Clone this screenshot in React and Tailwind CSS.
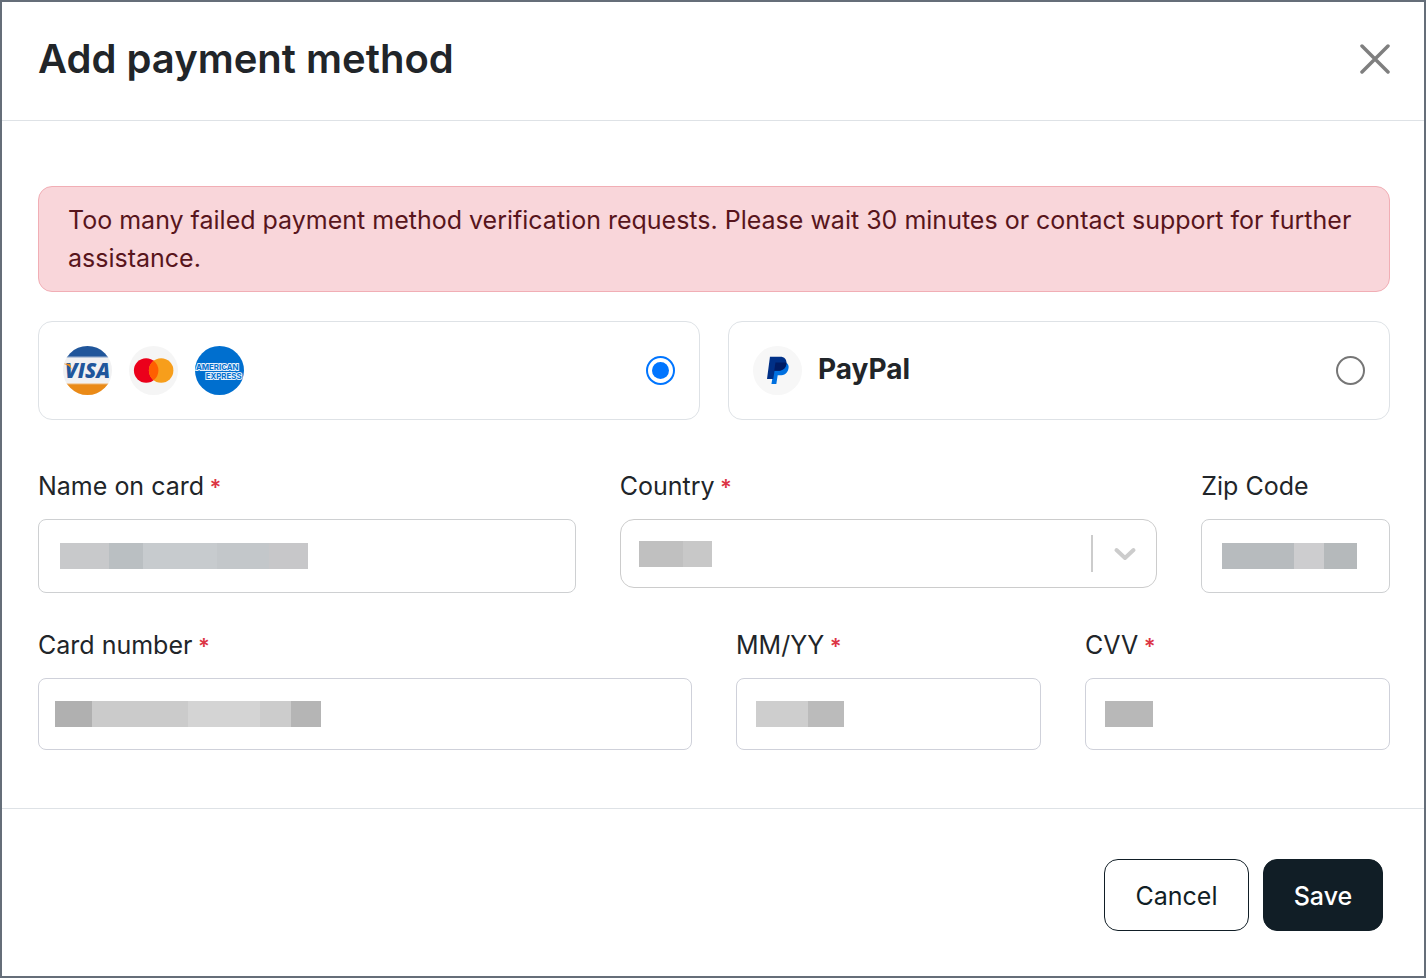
import React, { useState } from 'react'

const INPUT = 'block w-full rounded-lg border bg-white px-4 text-[25px] text-[#212529] focus:outline-none focus:ring-2 focus:ring-blue-500'

// Hidden values are shown as a strip of grey blocks: [width class, colour class]
const NAME_MASK = ['w-[49px] bg-[#c8c9cb]', 'w-[34px] bg-[#babfc2]', 'w-[74px] bg-[#c7cbce]', 'w-[52px] bg-[#c3c7ca]', 'w-[39px] bg-[#c7c7c9]']
const COUNTRY_MASK = ['w-[44px] bg-[#c0c0c0]', 'w-[29px] bg-[#c8c8c8]']
const ZIP_MASK = ['w-[72px] bg-[#b7bbbe]', 'w-[30px] bg-[#cdcdcf]', 'w-[33px] bg-[#b5b9bb]']
const CARD_MASK = ['w-[37px] bg-[#b0b0b0]', 'w-[96px] bg-[#cbcbcb]', 'w-[72px] bg-[#d4d4d4]', 'w-[31px] bg-[#cccccc]', 'w-[30px] bg-[#b5b5b5]']
const EXPIRY_MASK = ['w-[52px] bg-[#cecece]', 'w-[36px] bg-[#bbbbbb]']
const CVV_MASK = ['w-[48px] bg-[#b8b8b8]']

function Mask({ blocks, className }) {
  return (
    <span aria-hidden="true" className={`pointer-events-none absolute inset-y-0 flex items-center ${className}`}>
      {blocks.map((block, i) => (
        <span key={i} className={`h-[26px] ${block}`} />
      ))}
    </span>
  )
}

function Field({ id, label, required, className, children }) {
  return (
    <div className={className}>
      <label htmlFor={id} className="mb-[14px] block text-[25px] leading-[38px]">
        {label}
        {required && <span className="text-[22px] leading-none font-semibold text-[#dc3545]"> *</span>}
      </label>
      <div className="relative">{children}</div>
    </div>
  )
}

function VisaLogo() {
  return (
    <svg viewBox="0 0 50 50" className="h-[49px] w-[49px]" aria-hidden="true">
      <defs>
        <clipPath id="visa-circle">
          <circle cx="25" cy="25" r="25" />
        </clipPath>
      </defs>
      <g clipPath="url(#visa-circle)">
        <rect width="50" height="50" fill="#f1f1f2" />
        <rect width="50" height="11" fill="#20569b" />
        <rect y="11" width="50" height="1" fill="#a9bbd6" />
        <rect y="38" width="50" height="1" fill="#f3c997" />
        <rect y="39" width="50" height="11" fill="#ea8a17" />
      </g>
      <text x="2" y="33" fontFamily="Open Sans, sans-serif" fontWeight="800" fontStyle="italic" fontSize="21" fill="#20569b">
        VISA
      </text>
      <path d="M1 18h4.500c1.300 0 2 .5 2.300 1.800l1 4.200C7.500 21.300 4.800 19.200 1 18.400z" fill="#ea8a17" />
    </svg>
  )
}

function MastercardLogo() {
  return (
    <svg viewBox="0 0 50 50" className="h-[49px] w-[49px]" aria-hidden="true">
      <circle cx="25" cy="25" r="25" fill="#f5f5f5" />
      <circle cx="17.500" cy="25" r="12.500" fill="#eb001b" />
      <circle cx="32.800" cy="25" r="12.500" fill="#f79e1b" />
      <path d="M25.150 15.100a12.500 12.500 0 0 1 0 19.800a12.500 12.500 0 0 1 0-19.800z" fill="#ff5f00" />
    </svg>
  )
}

function AmexLogo() {
  return (
    <svg viewBox="0 0 50 50" className="h-[49px] w-[49px]" aria-hidden="true">
      <circle cx="25" cy="25" r="25" fill="#006fcf" />
      <g fontFamily="Inter, sans-serif" fontWeight="700" fontSize="8" fill="#006fcf" stroke="#e4effa" strokeWidth="2" paintOrder="stroke">
        <text x="1" y="24">AMERICAN</text>
        <text x="11" y="34">EXPRESS</text>
      </g>
    </svg>
  )
}

function PayPalLogo() {
  return (
    <svg viewBox="0 0 50 50" className="h-[49px] w-[49px]" aria-hidden="true">
      <circle cx="25" cy="25" r="25" fill="#f7f7f7" />
      <path d="M22.500 17.500h12.200c1.600 1.500 2 3.300 1.500 5.400-.9 4.800-4.100 7-8.900 7h-2.100l-1.400 9h-5z" fill="#0070e0" />
      <path d="M17.300 11h10.200c4.700 0 7.300 2.700 6.500 7.300-.9 4.900-4.200 7-9 7h-3l-1.300 8.500h-6.400l3-22.800z" fill="#003087" />
      <path d="M22.900 16.800h11.300c.1 5.500-3.500 8.500-9.200 8.500h-3.300z" fill="#001c64" />
    </svg>
  )
}

function MethodOption({ value, method, onChange, name, children }) {
  return (
    <label className="flex flex-1 items-center rounded-[14px] border border-[#dee2e6] p-6">
      {children}
      <input
        type="radio"
        name="method"
        aria-label={name}
        value={value}
        checked={method === value}
        onChange={() => onChange(value)}
        className="ml-auto h-[29px] w-[29px] appearance-none rounded-full border-2 border-[#767676] bg-clip-content p-1 checked:border-[#0075ff] checked:bg-[#0075ff]"
      />
    </label>
  )
}

export default function App() {
  const [method, setMethod] = useState('card')

  return (
    <div
      role="dialog"
      aria-labelledby="dialog-title"
      className="min-h-screen border-2 border-[#656e79] bg-white font-['Inter',sans-serif] text-[#212529]"
    >
      <header className="flex items-center justify-between border-b border-[#dee2e6] pt-[25px] pr-[34px] pb-[29px] pl-9">
        <h1 id="dialog-title" className="text-[40px] leading-[64px] font-semibold">
          Add payment method
        </h1>
        <button type="button" aria-label="Close" className="-mr-1 p-1">
          <svg viewBox="0 0 30 30" className="h-[30px] w-[30px]" fill="none" stroke="#7f7f7f" strokeWidth="3.500" strokeLinecap="round">
            <path d="M2 2l26 26M28 2L2 28" />
          </svg>
        </button>
      </header>

      <form onSubmit={(e) => e.preventDefault()}>
        <div className="pt-[65px] pr-[34px] pb-[58px] pl-9">
          <div role="alert" className="rounded-[14px] border border-[#f1aeb5] bg-[#f9d6da] px-[29px] py-[14px] text-[25px] leading-[38px] text-[#58151c]">
            Too many failed payment method verification requests. Please wait 30 minutes or contact support for further assistance.
          </div>

          <div className="mt-[29px] flex gap-7">
            <MethodOption value="card" name="Credit card" method={method} onChange={setMethod}>
              <span className="flex gap-[17px]">
                <VisaLogo />
                <MastercardLogo />
                <AmexLogo />
              </span>
            </MethodOption>
            <MethodOption value="paypal" name="PayPal" method={method} onChange={setMethod}>
              <PayPalLogo />
              <span className="ml-4 pb-1 text-[28px] leading-[38px] font-bold">PayPal</span>
            </MethodOption>
          </div>

          <div className="mt-[47px] grid grid-cols-12 gap-x-11 gap-y-[33px]">
            <Field id="name" label="Name on card" required className="col-span-5">
              <input id="name" type="text" className={`${INPUT} h-[74px] border-[#ced0d2]`} />
              <Mask blocks={NAME_MASK} className="left-[22px]" />
            </Field>
            <Field id="country" label="Country" required className="col-span-5">
              <select id="country" className="block h-[69px] w-full appearance-none rounded-[14px] border border-[#cccccc] bg-white px-4 text-[25px] focus:outline-none focus:ring-2 focus:ring-blue-500" />
              <Mask blocks={COUNTRY_MASK} className="left-[19px]" />
              <span className="pointer-events-none absolute inset-y-0 right-5 flex items-center gap-5">
                <span className="h-[37px] w-[2px] bg-[#cccccc]" />
                <svg viewBox="0 0 24 24" className="h-6 w-6" fill="none" stroke="#cccccc" strokeWidth="4" strokeLinecap="round" strokeLinejoin="round">
                  <path d="M3.500 8l8.500 8 8.500-8" />
                </svg>
              </span>
            </Field>
            <Field id="zip" label="Zip Code" className="col-span-2">
              <input id="zip" type="text" className={`${INPUT} h-[74px] border-[#ced0d2]`} />
              <Mask blocks={ZIP_MASK} className="left-[21px]" />
            </Field>

            <Field id="card-number" label="Card number" required className="col-span-6">
              <input id="card-number" type="text" inputMode="numeric" className={`${INPUT} h-[72px] border-[#cfd1da]`} />
              <Mask blocks={CARD_MASK} className="left-[17px]" />
            </Field>
            <Field id="expiry" label="MM/YY" required className="col-span-3">
              <input id="expiry" type="text" inputMode="numeric" className={`${INPUT} h-[72px] border-[#cfd1da]`} />
              <Mask blocks={EXPIRY_MASK} className="left-5" />
            </Field>
            <Field id="cvv" label="CVV" required className="col-span-3">
              <input id="cvv" type="text" inputMode="numeric" className={`${INPUT} h-[72px] border-[#cfd1da]`} />
              <Mask blocks={CVV_MASK} className="left-5" />
            </Field>
          </div>
        </div>

        <footer className="flex justify-end gap-[14px] border-t border-[#dee2e6] px-[41px] pt-[50px] pb-[45px]">
          <button type="button" className="h-[72px] min-w-[145px] rounded-[14px] border border-[#111e26] px-7 pt-[3px] text-[25px] text-[#111e26]">
            Cancel
          </button>
          <button type="submit" className="h-[72px] min-w-[120px] rounded-[14px] border border-[#111e26] bg-[#111e26] px-7 pt-[3px] text-[25px] font-medium text-white">
            Save
          </button>
        </footer>
      </form>
    </div>
  )
}
